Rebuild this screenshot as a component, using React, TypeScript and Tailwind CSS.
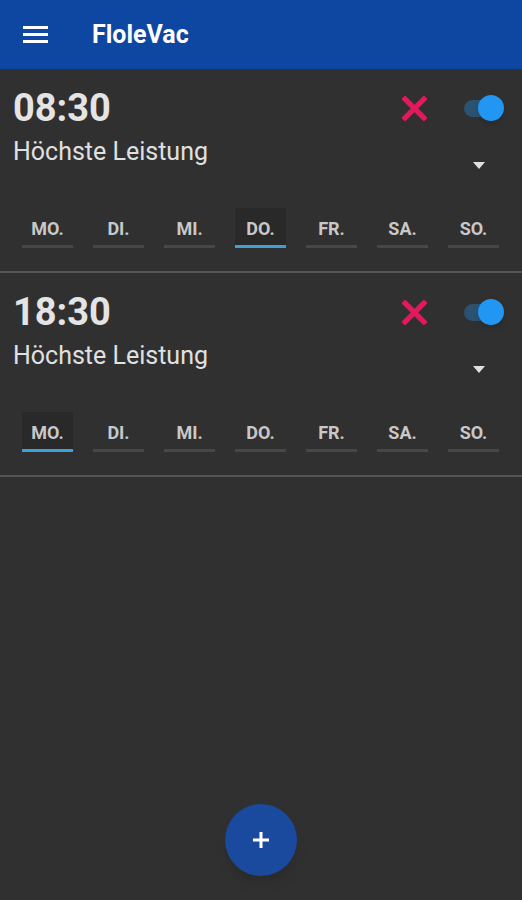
import { useState } from 'react'

const DAYS = ['MO.', 'DI.', 'MI.', 'DO.', 'FR.', 'SA.', 'SO.']

interface Alarm {
  id: number
  time: string
  mode: string
  enabled: boolean
  day: number
}

const INITIAL: Alarm[] = [
  { id: 1, time: '08:30', mode: 'Höchste Leistung', enabled: true, day: 3 },
  { id: 2, time: '18:30', mode: 'Höchste Leistung', enabled: true, day: 0 },
]

function Toggle({ on }: { on: boolean }) {
  return (
    <div className="relative w-[40px] h-[26px] flex items-center">
      <div className={`w-[34px] h-[17px] rounded-full ${on ? 'bg-[#2b5270]' : 'bg-[#666]'}`} />
      <div className={`absolute top-0 w-[26px] h-[26px] rounded-full shadow-md ${on ? 'left-[14px] bg-[#2196f3]' : 'left-0 bg-[#ccc]'}`} />
    </div>
  )
}

function AlarmCard({ alarm }: { alarm: Alarm }) {
  return (
    <div className="border-b-2 border-[#555]">
      <div className="flex justify-between pl-[13px] pr-[18px] pt-[16px]">
        <div>
          <div className="text-[38px] leading-[46px] font-bold text-[#e4e4e4]">{alarm.time}</div>
          <div className="mt-[6px] text-[25px] leading-[30px] text-[#e0e0e0]">{alarm.mode}</div>
        </div>
        <div className="flex flex-col items-end">
          <div className="flex items-center gap-[37px] mt-[10px]">
            <svg width="25" height="25" viewBox="0 0 24 24">
              <path d="M3 3L21 21M21 3L3 21" stroke="#e8175d" strokeWidth="5" strokeLinecap="square" />
            </svg>
            <Toggle on={alarm.enabled} />
          </div>
          <div className="mt-[41px] mr-[19px] flex">
            <svg width="12" height="7" viewBox="0 0 12 7">
              <path d="M0 0L12 0L6 7Z" fill="#e0e0e0" />
            </svg>
          </div>
        </div>
      </div>
      <div className="flex gap-[20px] px-[22px] mt-[39px] mb-[23px]">
        {DAYS.map((d, i) => (
          <button
            key={d}
            className={`w-[51px] h-[40px] flex flex-col justify-end ${i === alarm.day ? 'bg-[#292929]' : ''}`}
          >
            <span className="flex-1 flex items-center justify-center pt-[3px] text-[18px] font-bold text-[#c8c8c8]">{d}</span>
            <span className={`h-[3px] w-full ${i === alarm.day ? 'bg-[#3ea0d8]' : 'bg-[#474747]'}`} />
          </button>
        ))}
      </div>
    </div>
  )
}

export default function App() {
  const [alarms] = useState(INITIAL)

  return (
    <div className="w-[522px] h-[900px] bg-[#303030] flex flex-col font-['Roboto',sans-serif]">
      <header className="h-[69px] bg-[#0d47a1] flex items-center pl-[23px] shrink-0">
        <svg width="25" height="18" viewBox="0 0 25 18">
          <path d="M0 1.5H25M0 8.5H25M0 15.5H25" stroke="#fff" strokeWidth="3" />
        </svg>
        <h1 className="ml-[44px] text-[25px] font-bold text-white">FloleVac</h1>
      </header>
      <main className="flex-1 flex flex-col">
        {alarms.map(a => <AlarmCard key={a.id} alarm={a} />)}
        <div className="flex-1" />
        <div className="flex justify-center pb-[24px]">
          <button className="w-[72px] h-[72px] rounded-full bg-[#1a4a9e] flex items-center justify-center shadow-lg">
            <svg width="20" height="20" viewBox="0 0 20 20">
              <path d="M10 2V18M2 10H18" stroke="#fff" strokeWidth="3" />
            </svg>
          </button>
        </div>
      </main>
    </div>
  )
}
